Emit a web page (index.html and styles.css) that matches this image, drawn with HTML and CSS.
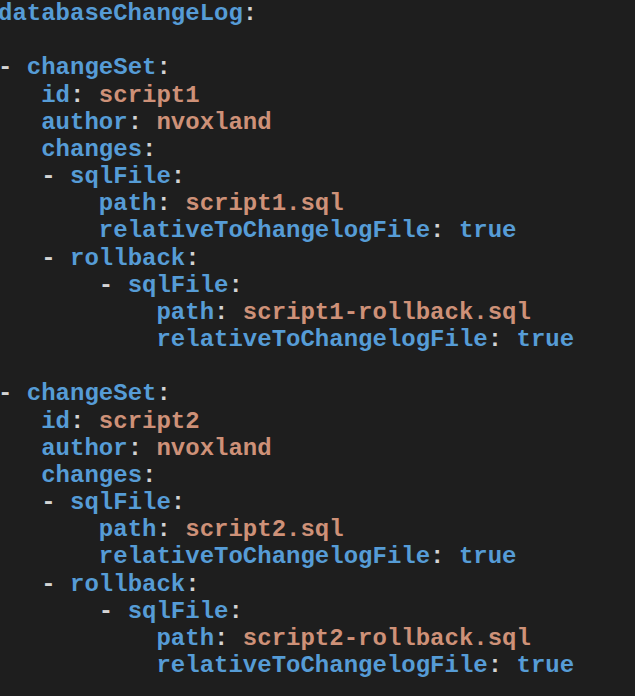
FILE: index.html
```html
<!DOCTYPE html>
<html>
<head>
<meta charset="utf-8">
<link rel="stylesheet" href="styles.css">
</head>
<body>
<pre class="code"><span class="k">databaseChangeLog</span><span class="p">:</span>

<span class="p">-</span> <span class="k">changeSet</span><span class="p">:</span>
   <span class="k">id</span><span class="p">:</span> <span class="s">script1</span>
   <span class="k">author</span><span class="p">:</span> <span class="s">nvoxland</span>
   <span class="k">changes</span><span class="p">:</span>
   <span class="p">-</span> <span class="k">sqlFile</span><span class="p">:</span>
       <span class="k">path</span><span class="p">:</span> <span class="s">script1.sql</span>
       <span class="k">relativeToChangelogFile</span><span class="p">:</span> <span class="k">true</span>
   <span class="p">-</span> <span class="k">rollback</span><span class="p">:</span>
       <span class="p">-</span> <span class="k">sqlFile</span><span class="p">:</span>
           <span class="k">path</span><span class="p">:</span> <span class="s">script1-rollback.sql</span>
           <span class="k">relativeToChangelogFile</span><span class="p">:</span> <span class="k">true</span>

<span class="p">-</span> <span class="k">changeSet</span><span class="p">:</span>
   <span class="k">id</span><span class="p">:</span> <span class="s">script2</span>
   <span class="k">author</span><span class="p">:</span> <span class="s">nvoxland</span>
   <span class="k">changes</span><span class="p">:</span>
   <span class="p">-</span> <span class="k">sqlFile</span><span class="p">:</span>
       <span class="k">path</span><span class="p">:</span> <span class="s">script2.sql</span>
       <span class="k">relativeToChangelogFile</span><span class="p">:</span> <span class="k">true</span>
   <span class="p">-</span> <span class="k">rollback</span><span class="p">:</span>
       <span class="p">-</span> <span class="k">sqlFile</span><span class="p">:</span>
           <span class="k">path</span><span class="p">:</span> <span class="s">script2-rollback.sql</span>
           <span class="k">relativeToChangelogFile</span><span class="p">:</span> <span class="k">true</span>
</pre>
</body>
</html>
```
FILE: styles.css
```css
html, body {
  margin: 0;
  padding: 0;
  background: #1e1e1e;
  height: 100%;
  overflow: hidden;
}
.code {
  margin: 0;
  padding: 0;
  transform: translateX(-2px);
  font-family: "Liberation Mono", "Courier New", monospace;
  font-weight: bold;
  font-size: 24px;
  line-height: 27.17px;
  color: #d4d4d4;
  white-space: pre;
}
.k { color: #569cd6; }
.s { color: #ce9178; }
.p { color: #d4d4d4; }
```
